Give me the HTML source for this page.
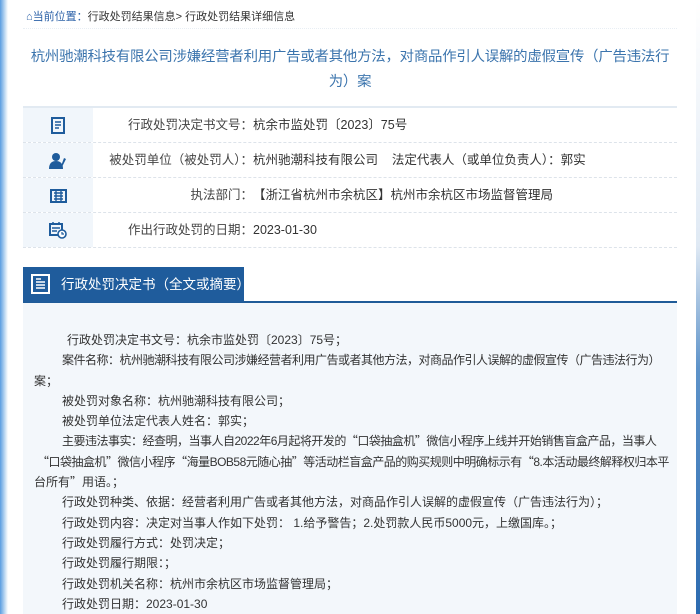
<!DOCTYPE html>
<html><head><meta charset="utf-8"><style>
*{margin:0;padding:0;box-sizing:border-box}
body{width:700px;height:614px;overflow:hidden;background:#fff;font-family:"Liberation Sans","Noto Sans CJK SC",sans-serif;color:#333;position:relative}
.q{font-family:"Noto Sans CJK SC",sans-serif}
.ls{position:absolute;left:0;top:0;width:8px;height:614px;background:linear-gradient(90deg,#5a9de0,#cfe3f5 70%,#fff)}
.rs{position:absolute;right:0;top:0;width:4px;height:614px;background:linear-gradient(180deg,#fff,#dfe9f4 40%,#5e93c9 60%,#2c6bb0)}
.crumb{position:absolute;left:26px;top:8px;font-size:11px;color:#333}
.crumb b{color:#2d62a8;font-weight:normal}
.hr1{position:absolute;left:23px;top:28px;width:654px;border-top:1px dotted #e8eef4}
.title{position:absolute;left:0;top:45px;width:700px;text-align:center;font-size:14.4px;letter-spacing:-0.2px;line-height:25px;color:#3b74ad;white-space:nowrap}
.title .l2{display:block;text-align:right;padding-right:335px}
.info{position:absolute;left:23px;top:106px;width:654px;border-top:2px solid #e2eaf2}
.row{height:35px;border-bottom:1px dashed #dde3ea;display:flex;font-size:12.5px}
.ic{width:70px;background:#f1f6fb;display:flex;align-items:center;justify-content:center}
.lb{width:160px;text-align:right;line-height:35px;color:#444}
.vl{line-height:35px;color:#333}
.tabline{position:absolute;left:23px;top:301px;width:654px;height:2px;background:#1f5b98}
.tab{position:absolute;left:23px;top:267px;width:221px;height:35px;background:#1f5c9c;color:#fff;font-size:13.5px;line-height:35px;padding-left:38px;white-space:nowrap}
.tab svg{position:absolute;left:8px;top:7px}
.body{position:absolute;left:23px;top:303px;width:654px;height:311px;background:#f3f7fb;padding-top:27px;font-size:12px;line-height:20.3px;color:#333;white-space:nowrap;overflow:hidden}
.body div{padding-left:39px}
.body .w{padding-left:11px}
.body .f{padding-left:44px}
.body .t{letter-spacing:-0.5px}
</style></head><body>
<div class="ls"></div><div class="rs"></div>
<div class="crumb"><span style="color:#2d62a8">&#8962;</span><b>当前位置：</b>行政处罚结果信息&gt; 行政处罚结果详细信息</div>
<div class="hr1"></div>
<div class="title">杭州驰潮科技有限公司涉嫌经营者利用广告或者其他方法，对商品作引人误解的虚假宣传（广告违法行<br>为）案</div>
<div class="info">
<div class="row"><div class="ic"><svg width="14" height="17" viewBox="0 0 14 17"><rect x="1" y="1" width="12" height="15" fill="none" stroke="#1f5c9c" stroke-width="2"/><path d="M4 5h6M4 8h6M4 11h4" stroke="#1f5c9c" stroke-width="1.5"/></svg></div><div class="lb">行政处罚决定书文号：</div><div class="vl">杭余市监处罚〔2023〕75号</div></div>
<div class="row"><div class="ic"><svg width="18" height="17" viewBox="0 0 18 17"><circle cx="7" cy="5" r="4" fill="#1f5c9c"/><path d="M0 17c0-6 3-8 7-8s7 2 7 8z" fill="#1f5c9c"/><path d="M15 6l2 1-4 8-1-1z" fill="#1f5c9c"/></svg></div><div class="lb">被处罚单位（被处罚人）：</div><div class="vl">杭州驰潮科技有限公司&nbsp;&nbsp;&nbsp;&nbsp;法定代表人（或单位负责人）：郭实</div></div>
<div class="row"><div class="ic"><svg width="17" height="15" viewBox="0 0 17 15"><rect x="1" y="2" width="15" height="12" fill="none" stroke="#1f5c9c" stroke-width="2"/><path d="M4 5h9M4 8h9M4 11h9M6 3v11M11 3v11" stroke="#1f5c9c" stroke-width="1.4"/></svg></div><div class="lb">执法部门：</div><div class="vl">【浙江省杭州市余杭区】杭州市余杭区市场监督管理局</div></div>
<div class="row"><div class="ic"><svg width="18" height="18" viewBox="0 0 18 18"><rect x="1" y="3" width="12" height="11" fill="none" stroke="#1f5c9c" stroke-width="2"/><path d="M4 1v3M10 1v3M3 7h8M3 10h5" stroke="#1f5c9c" stroke-width="1.5"/><circle cx="13" cy="13" r="4" fill="#fff" stroke="#1f5c9c" stroke-width="1.6"/><path d="M13 11v2h2" stroke="#1f5c9c" stroke-width="1.2" fill="none"/></svg></div><div class="lb">作出行政处罚的日期：</div><div class="vl">2023-01-30</div></div>
</div>
<div class="tabline"></div>
<div class="tab"><svg width="19" height="20" viewBox="0 0 19 20"><rect x="1" y="1" width="17" height="18" fill="none" stroke="#fff" stroke-width="2"/><path d="M5 5h5M5 8h9M5 11h9M5 14h9" stroke="#fff" stroke-width="1.5"/></svg>行政处罚决定书（全文或摘要）</div>
<div class="body">
<div class="f">行政处罚决定书文号：杭余市监处罚〔2023〕75号；</div>
<div class="t">案件名称：杭州驰潮科技有限公司涉嫌经营者利用广告或者其他方法，对商品作引人误解的虚假宣传（广告违法行为）</div>
<div class="w">案；</div>
<div>被处罚对象名称：杭州驰潮科技有限公司；</div>
<div>被处罚单位法定代表人姓名：郭实；</div>
<div class="t">主要违法事实：经查明，当事人自2022年6月起将开发的<span class="q">“</span>口袋抽盒机<span class="q">”</span>微信小程序上线并开始销售盲盒产品，当事人</div>
<div class="w t" style="padding-left:14px"><span class="q">“</span>口袋抽盒机<span class="q">”</span>微信小程序<span class="q">“</span>海量BOB58元随心抽<span class="q">”</span>等活动栏盲盒产品的购买规则中明确标示有<span class="q">“</span>8.本活动最终解释权归本平</div>
<div class="w">台所有<span class="q">”</span>用语。；</div>
<div>行政处罚种类、依据：经营者利用广告或者其他方法，对商品作引人误解的虚假宣传（广告违法行为）；</div>
<div>行政处罚内容：决定对当事人作如下处罚： 1.给予警告；2.处罚款人民币5000元，上缴国库。；</div>
<div>行政处罚履行方式：处罚决定；</div>
<div>行政处罚履行期限：；</div>
<div>行政处罚机关名称：杭州市余杭区市场监督管理局；</div>
<div>行政处罚日期：2023-01-30</div>
</div>
</body></html>
